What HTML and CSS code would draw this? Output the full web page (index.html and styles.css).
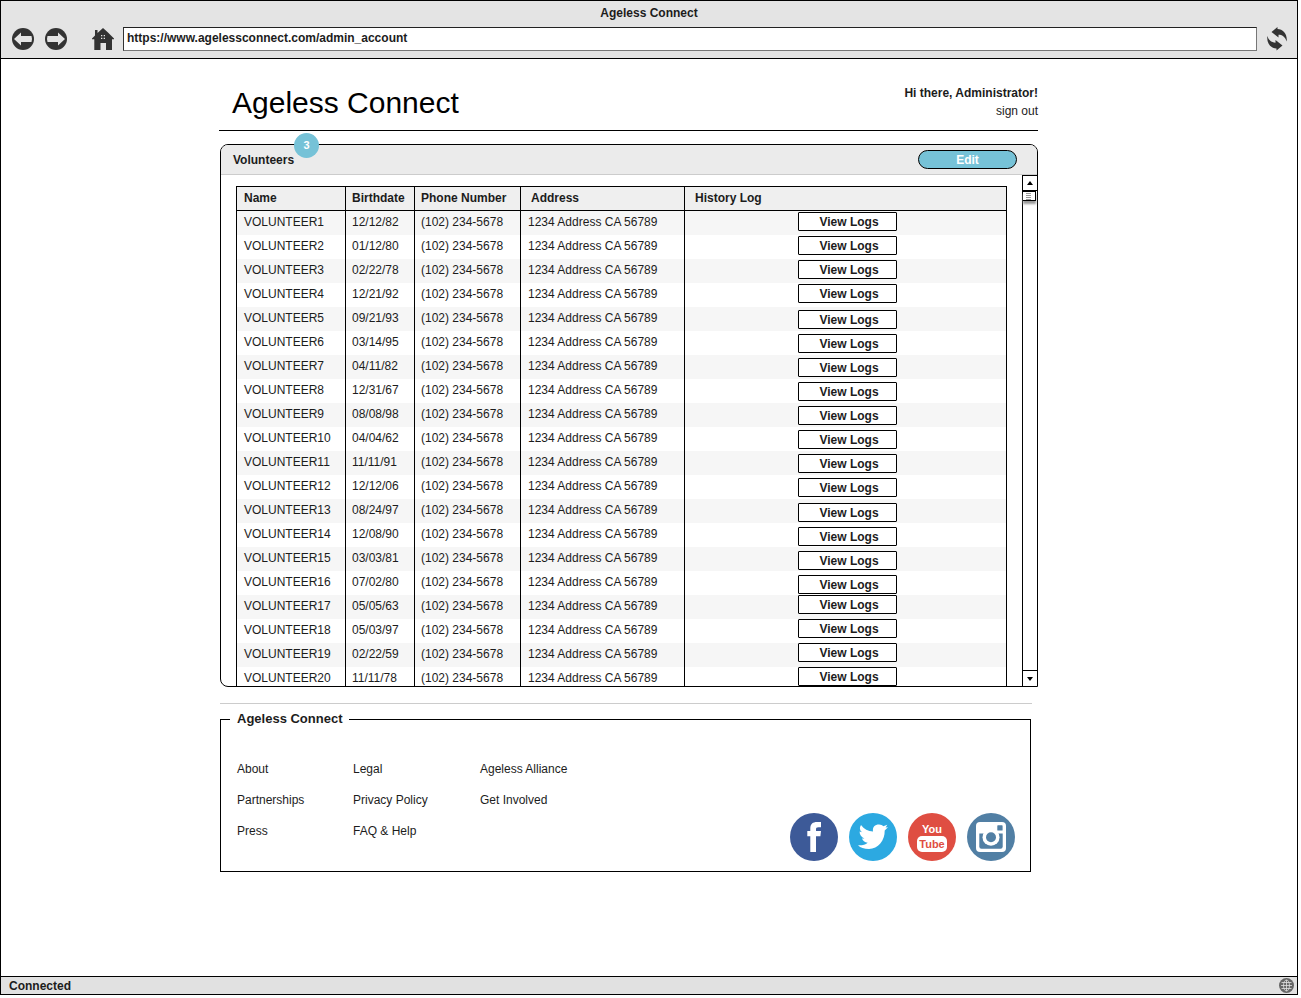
FILE: index.html
```html
<!DOCTYPE html>
<html lang="en">
<head>
<meta charset="utf-8">
<title>Ageless Connect</title>
<link rel="stylesheet" href="styles.css">
</head>
<body>
<div class="window">
  <header class="chrome">
    <div class="chrome-title">Ageless Connect</div>
    <div class="toolbar">
      <button class="icon-btn" type="button" aria-label="Back"><svg width="22" height="22" viewBox="0 0 22 22"><circle cx="11" cy="11" r="11" fill="#333"/><path d="M2 11 9 4.500V8H19.500Q20.500 11 19.500 14H9V17.500Z" fill="#e4e4e4"/></svg></button>
      <button class="icon-btn" type="button" aria-label="Forward"><svg width="22" height="22" viewBox="0 0 22 22"><circle cx="11" cy="11" r="11" fill="#333"/><path d="M20 11 13 4.500V8H2.500Q1.500 11 2.500 14H13V17.500Z" fill="#e4e4e4"/></svg></button>
      <button class="icon-btn home" type="button" aria-label="Home"><svg width="22" height="22" viewBox="0 0 22 22"><path d="M11 0 16 4.500 22 10.500V11.300H20V22H14V15H8.500V22H2.300V11.300H0V10.500L3 7.600V2H5.500V5L11 0Z" fill="#333"/><path d="M9 7h1.300v1.300H9zM11.700 7H13v1.300h-1.300zM9 9.700h1.300V11H9zM11.700 9.700H13V11h-1.300z" fill="#e4e4e4"/></svg></button>
      <input class="address" type="text" aria-label="Address" value="https://www.agelessconnect.com/admin_account">
      <button class="icon-btn" type="button" aria-label="Reload"><svg width="20" height="24" viewBox="0 0 20 24"><g fill="#333"><path d="M4.500 5 10.500 0V2C16 2 20.500 7 19.700 14.500 18 9.500 15 7.800 11.500 7.800V10.500Z"/><path d="M15.500 18.500 9.500 23.500V21.500C4 21.500-.5 16.500.3 9 2 14 5 15.700 8.500 15.700V13Z"/></g></svg></button>
    </div>
  </header>

  <main class="page">
    <div class="content">
      <div class="masthead">
        <h1>Ageless Connect</h1>
        <div class="account">
          <strong>Hi there, Administrator!</strong>
          <a href="#signout">sign out</a>
        </div>
      </div>

      <section class="panel">
        <div class="panel-head">
          <h2>Volunteers<span class="badge">3</span></h2>
          <button class="edit" type="button">Edit</button>
        </div>
        <div class="panel-body">
          <div class="viewport">
            <table>
              <thead>
                <tr><th class="c-name">Name</th><th class="c-birth">Birthdate</th><th class="c-phone">Phone Number</th><th class="c-addr">Address</th><th class="c-log">History Log</th></tr>
              </thead>
              <tbody class="near">
                <tr><td>VOLUNTEER1</td><td>12/12/82</td><td>(102) 234-5678</td><td>1234 Address CA 56789</td><td><button type="button">View Logs</button></td></tr>
                <tr><td>VOLUNTEER2</td><td>01/12/80</td><td>(102) 234-5678</td><td>1234 Address CA 56789</td><td><button type="button">View Logs</button></td></tr>
                <tr><td>VOLUNTEER3</td><td>02/22/78</td><td>(102) 234-5678</td><td>1234 Address CA 56789</td><td><button type="button">View Logs</button></td></tr>
                <tr><td>VOLUNTEER4</td><td>12/21/92</td><td>(102) 234-5678</td><td>1234 Address CA 56789</td><td><button type="button">View Logs</button></td></tr>
              </tbody>
              <tbody class="mid">
                <tr><td>VOLUNTEER5</td><td>09/21/93</td><td>(102) 234-5678</td><td>1234 Address CA 56789</td><td><button type="button">View Logs</button></td></tr>
                <tr><td>VOLUNTEER6</td><td>03/14/95</td><td>(102) 234-5678</td><td>1234 Address CA 56789</td><td><button type="button">View Logs</button></td></tr>
                <tr><td>VOLUNTEER7</td><td>04/11/82</td><td>(102) 234-5678</td><td>1234 Address CA 56789</td><td><button type="button">View Logs</button></td></tr>
                <tr><td>VOLUNTEER8</td><td>12/31/67</td><td>(102) 234-5678</td><td>1234 Address CA 56789</td><td><button type="button">View Logs</button></td></tr>
              </tbody>
              <tbody class="mid">
                <tr><td>VOLUNTEER9</td><td>08/08/98</td><td>(102) 234-5678</td><td>1234 Address CA 56789</td><td><button type="button">View Logs</button></td></tr>
                <tr><td>VOLUNTEER10</td><td>04/04/62</td><td>(102) 234-5678</td><td>1234 Address CA 56789</td><td><button type="button">View Logs</button></td></tr>
                <tr><td>VOLUNTEER11</td><td>11/11/91</td><td>(102) 234-5678</td><td>1234 Address CA 56789</td><td><button type="button">View Logs</button></td></tr>
                <tr><td>VOLUNTEER12</td><td>12/12/06</td><td>(102) 234-5678</td><td>1234 Address CA 56789</td><td><button type="button">View Logs</button></td></tr>
              </tbody>
              <tbody class="far">
                <tr><td>VOLUNTEER13</td><td>08/24/97</td><td>(102) 234-5678</td><td>1234 Address CA 56789</td><td><button type="button">View Logs</button></td></tr>
                <tr><td>VOLUNTEER14</td><td>12/08/90</td><td>(102) 234-5678</td><td>1234 Address CA 56789</td><td><button type="button">View Logs</button></td></tr>
                <tr><td>VOLUNTEER15</td><td>03/03/81</td><td>(102) 234-5678</td><td>1234 Address CA 56789</td><td><button type="button">View Logs</button></td></tr>
                <tr><td>VOLUNTEER16</td><td>07/02/80</td><td>(102) 234-5678</td><td>1234 Address CA 56789</td><td><button type="button">View Logs</button></td></tr>
              </tbody>
              <tbody>
                <tr><td>VOLUNTEER17</td><td>05/05/63</td><td>(102) 234-5678</td><td>1234 Address CA 56789</td><td><button type="button">View Logs</button></td></tr>
                <tr><td>VOLUNTEER18</td><td>05/03/97</td><td>(102) 234-5678</td><td>1234 Address CA 56789</td><td><button type="button">View Logs</button></td></tr>
                <tr><td>VOLUNTEER19</td><td>02/22/59</td><td>(102) 234-5678</td><td>1234 Address CA 56789</td><td><button type="button">View Logs</button></td></tr>
                <tr><td>VOLUNTEER20</td><td>11/11/78</td><td>(102) 234-5678</td><td>1234 Address CA 56789</td><td><button type="button">View Logs</button></td></tr>
              </tbody>
            </table>
          </div>
          <div class="scrollbar">
            <button class="step up" type="button" aria-label="Scroll up"><svg width="6" height="4" viewBox="0 0 6 4"><path d="M3 0 6 4H0Z"/></svg></button>
            <div class="thumb"><i></i><i></i><i></i><i></i></div>
            <button class="step down" type="button" aria-label="Scroll down"><svg width="6" height="4" viewBox="0 0 6 4"><path d="M0 0H6L3 4Z"/></svg></button>
          </div>
        </div>
      </section>

      <footer class="site-footer">
        <fieldset>
          <legend>Ageless Connect</legend>
          <div class="footer-row">
            <nav class="links">
              <a href="#about">About</a><a href="#legal">Legal</a><a href="#alliance">Ageless Alliance</a>
              <a href="#partnerships">Partnerships</a><a href="#privacy">Privacy Policy</a><a href="#involved">Get Involved</a>
              <a href="#press">Press</a><a href="#faq">FAQ &amp; Help</a>
            </nav>
            <div class="social">
              <a href="#facebook" aria-label="Facebook"><svg width="48" height="48" viewBox="0 0 48 48"><circle cx="24" cy="24" r="24" fill="#3d5a98"/><path d="M17.300 18H20.300V15.500C20.300 11 22.800 9 27 9H31V14.200H28.500C26.400 14.200 26 15 26 16.500V18H31L30.400 23.300H26V39H20.300V23.300H17.300Z" fill="#fff"/></svg></a>
              <a href="#twitter" aria-label="Twitter"><svg width="48" height="48" viewBox="0 0 48 48"><circle cx="24" cy="24" r="24" fill="#2ca9e1"/><path d="M12 12C15 16 19 18.200 24 18.500 23.300 14 26 11.500 30 11.500 32 11.500 33.300 12.200 34.300 13.300L38.300 11.800 36.600 14.600 39 14.200 35.700 17.500C36 27.500 29 36 20 36 15 36 11.500 34.800 9 32.300 13 32.600 16.300 31.700 18.700 29.700 15.500 29.300 13.800 27.600 13 25.500H15.500C12 24 10.600 21.500 10.600 18.500L13 19.300C10.500 17.300 10.300 14.500 12 12Z" fill="#fff"/></svg></a>
              <a href="#youtube" aria-label="YouTube"><svg width="48" height="48" viewBox="0 0 48 48"><circle cx="24" cy="24" r="24" fill="#df4e42"/><rect x="9" y="23" width="30" height="16" rx="5" fill="#fff"/><text class="yt" x="24" y="20" fill="#fff">You</text><text class="yt" x="24" y="35" fill="#df4e42">Tube</text></svg></a>
              <a href="#instagram" aria-label="Instagram"><svg width="48" height="48" viewBox="0 0 48 48"><circle cx="24" cy="24" r="24" fill="#517fa4"/><rect x="9" y="9" width="30" height="30" rx="4" fill="#fff"/><path d="M12.300 20.500H35.700V33.500Q35.700 35.700 33.500 35.700H14.500Q12.300 35.700 12.300 33.500Z" fill="#517fa4"/><circle cx="24" cy="24.300" r="8.500" fill="#fff"/><circle cx="24" cy="24.300" r="5" fill="#517fa4"/><rect x="30.300" y="12.300" width="5.300" height="5.300" rx=".6" fill="#517fa4"/></svg></a>
            </div>
          </div>
        </fieldset>
      </footer>
    </div>
  </main>

  <div class="status">
    <span>Connected</span>
    <svg width="15" height="15" viewBox="0 0 15 15"><circle cx="7.500" cy="7.500" r="7.500" fill="#666"/><g fill="none" stroke="#e1e1e1" stroke-width=".8"><path d="M2.500 4.500H12.500M2 7.500H13M2.500 10.500H12.500M7.500 2V13"/><ellipse cx="7.500" cy="7.500" rx="3" ry="5.500"/></g></svg>
  </div>
</div>
</body>
</html>
```
FILE: styles.css
```css
* { box-sizing: border-box; }

body {
  margin: 0;
  padding: 0 3px 3px 0;
  background: #fff;
  color: #1c1c1c;
  font: 12px/16px "Liberation Sans", Arial, sans-serif;
}

button, input { font: inherit; color: inherit; }
button { padding: 0; }
svg { display: block; }
a { color: inherit; text-decoration: none; }

.window {
  display: flex;
  flex-direction: column;
  min-height: calc(100vh - 3px);
  border: 1px solid #000;
}

/* Browser chrome */
.chrome {
  height: 59px;
  padding-top: 4px;
  background: #e4e4e4;
  border-bottom: 1px solid #000;
  margin-bottom: -1px;
}
.chrome-title { text-align: center; font-weight: bold; }
.toolbar {
  display: flex;
  align-items: center;
  gap: 11px;
  padding: 6px 10px 0 11px;
}
.icon-btn { border: 0; background: none; }
.home { margin-left: 14px; }
.address {
  flex: 1;
  min-width: 0;
  height: 24px;
  margin: 0 -1px 0 -2px;
  padding: 0 3px 2px;
  border: 1px solid #777;
  border-top-color: #222;
  border-left-color: #333;
  background: #fff;
  font-weight: bold;
}
.chrome { height: 58px; margin-bottom: 0; }

/* Page */
.page {
  flex: 1;
  display: grid;
  grid-template-columns: 218fr 819fr 259fr;
}
.content { grid-column: 2; min-width: 0; }
.masthead {
  display: flex;
  justify-content: space-between;
  height: 72px;
  padding: 25px 0 0 13px;
  border-bottom: 1px solid #000;
}
h1 {
  margin: 0;
  color: #000;
  font-size: 30px;
  font-weight: normal;
  line-height: 38px;
}
.account {
  display: flex;
  flex-direction: column;
  align-items: flex-end;
  line-height: 18px;
}

/* Volunteer panel */
.panel {
  margin: 13px 0 0 1px;
  border: 1px solid #000;
  border-radius: 8px 8px 0 8px;
}
.panel-head {
  display: flex;
  align-items: center;
  justify-content: space-between;
  height: 30px;
  padding: 0 20px 0 12px;
  background: #ebebeb;
  border-bottom: 1px solid #ccc;
  border-radius: 7px 7px 0 0;
}
h2 {
  position: relative;
  margin: 0;
  font-size: 12px;
}
.badge {
  position: absolute;
  left: 100%;
  bottom: 10px;
  width: 25px;
  height: 25px;
  border-radius: 50%;
  background: #76c2d7;
  color: #fff;
  font-size: 11px;
  line-height: 24px;
  text-align: center;
}
.edit {
  width: 99px;
  height: 19px;
  border: 1px solid #000;
  border-radius: 10px;
  background: #76c2d7;
  color: #fff;
  font-weight: bold;
  line-height: 16px;
}
.panel-body { display: flex; height: 511px; }
.viewport {
  flex: 1;
  min-width: 0;
  overflow: hidden;
  padding: 11px 15px 0;
}

table {
  width: 100%;
  table-layout: fixed;
  border-collapse: separate;
  border-spacing: 0;
  border-left: 1px solid #000;
}
th, td {
  height: 24px;
  padding: 0 0 2px 7px;
  border-right: 1px solid #000;
  text-align: left;
  white-space: nowrap;
}
th {
  height: 25px;
  background: #efefef;
  border-top: 1px solid #000;
  border-bottom: 1px solid #000;
}
th:nth-child(2), td:nth-child(2),
th:nth-child(3), td:nth-child(3) { padding-left: 6px; }
.c-name { width: 109px; }
.c-birth { width: 69px; }
.c-phone { width: 106px; }
.c-addr { width: 164px; }
th.c-addr, th.c-log { padding-left: 10px; }
tbody tr:nth-child(odd) { background: #f6f6f6; }
td:last-child {
  padding: 0 0 0 113px;
  vertical-align: top;
}
.near td:last-child { padding-top: 1px; }
.mid td:last-child { padding-top: 3px; }
.far td:last-child { padding-top: 4px; }
td button {
  display: block;
  width: 99px;
  height: 19px;
  padding-left: 3px;
  border: 1px solid #000;
  border-radius: 1px;
  background: #fff;
  font-weight: bold;
  line-height: 16px;
}

.scrollbar {
  display: flex;
  flex-direction: column;
  width: 15px;
  border-left: 1px solid #000;
}
.step {
  display: grid;
  place-items: center;
  height: 16px;
  border: 0 solid #000;
  background: #fff;
}
.up { border-width: 1px 0; }
.down { margin-top: auto; border-top-width: 1px; }
.thumb {
  display: flex;
  flex-direction: column;
  gap: 1px;
  width: 13px;
  height: 10px;
  padding: 1px 0 0 3px;
  border: 1px solid #000;
  border-left: 0;
  background: #fff;
  box-shadow: 0 3px 2px #999;
}
.thumb i { width: 5px; height: 1px; background: #999; }

/* Footer */
.site-footer {
  margin: 16px 6px 0 1px;
  padding-top: 7px;
  border-top: 1px solid #ccc;
}
fieldset {
  min-width: 0;
  margin: 0 1px 0 0;
  padding: 0;
  border: 1px solid #000;
}
legend {
  margin-left: 9px;
  padding: 0 7px;
  font-size: 13px;
  font-weight: bold;
}
.footer-row {
  display: flex;
  justify-content: space-between;
  align-items: flex-end;
  padding: 34px 15px 10px 16px;
}
.links {
  display: grid;
  grid-template-columns: 116px 127px auto;
  row-gap: 15px;
  padding-bottom: 22px;
}
.social { display: flex; gap: 11px; }
.yt {
  font: bold 11px "Liberation Sans", sans-serif;
  text-anchor: middle;
}

/* Status bar */
.status {
  display: flex;
  align-items: center;
  justify-content: space-between;
  height: 18px;
  padding: 0 3px 0 8px;
  border-top: 1px solid #000;
  background: #e1e1e1;
  font-weight: bold;
}
```
